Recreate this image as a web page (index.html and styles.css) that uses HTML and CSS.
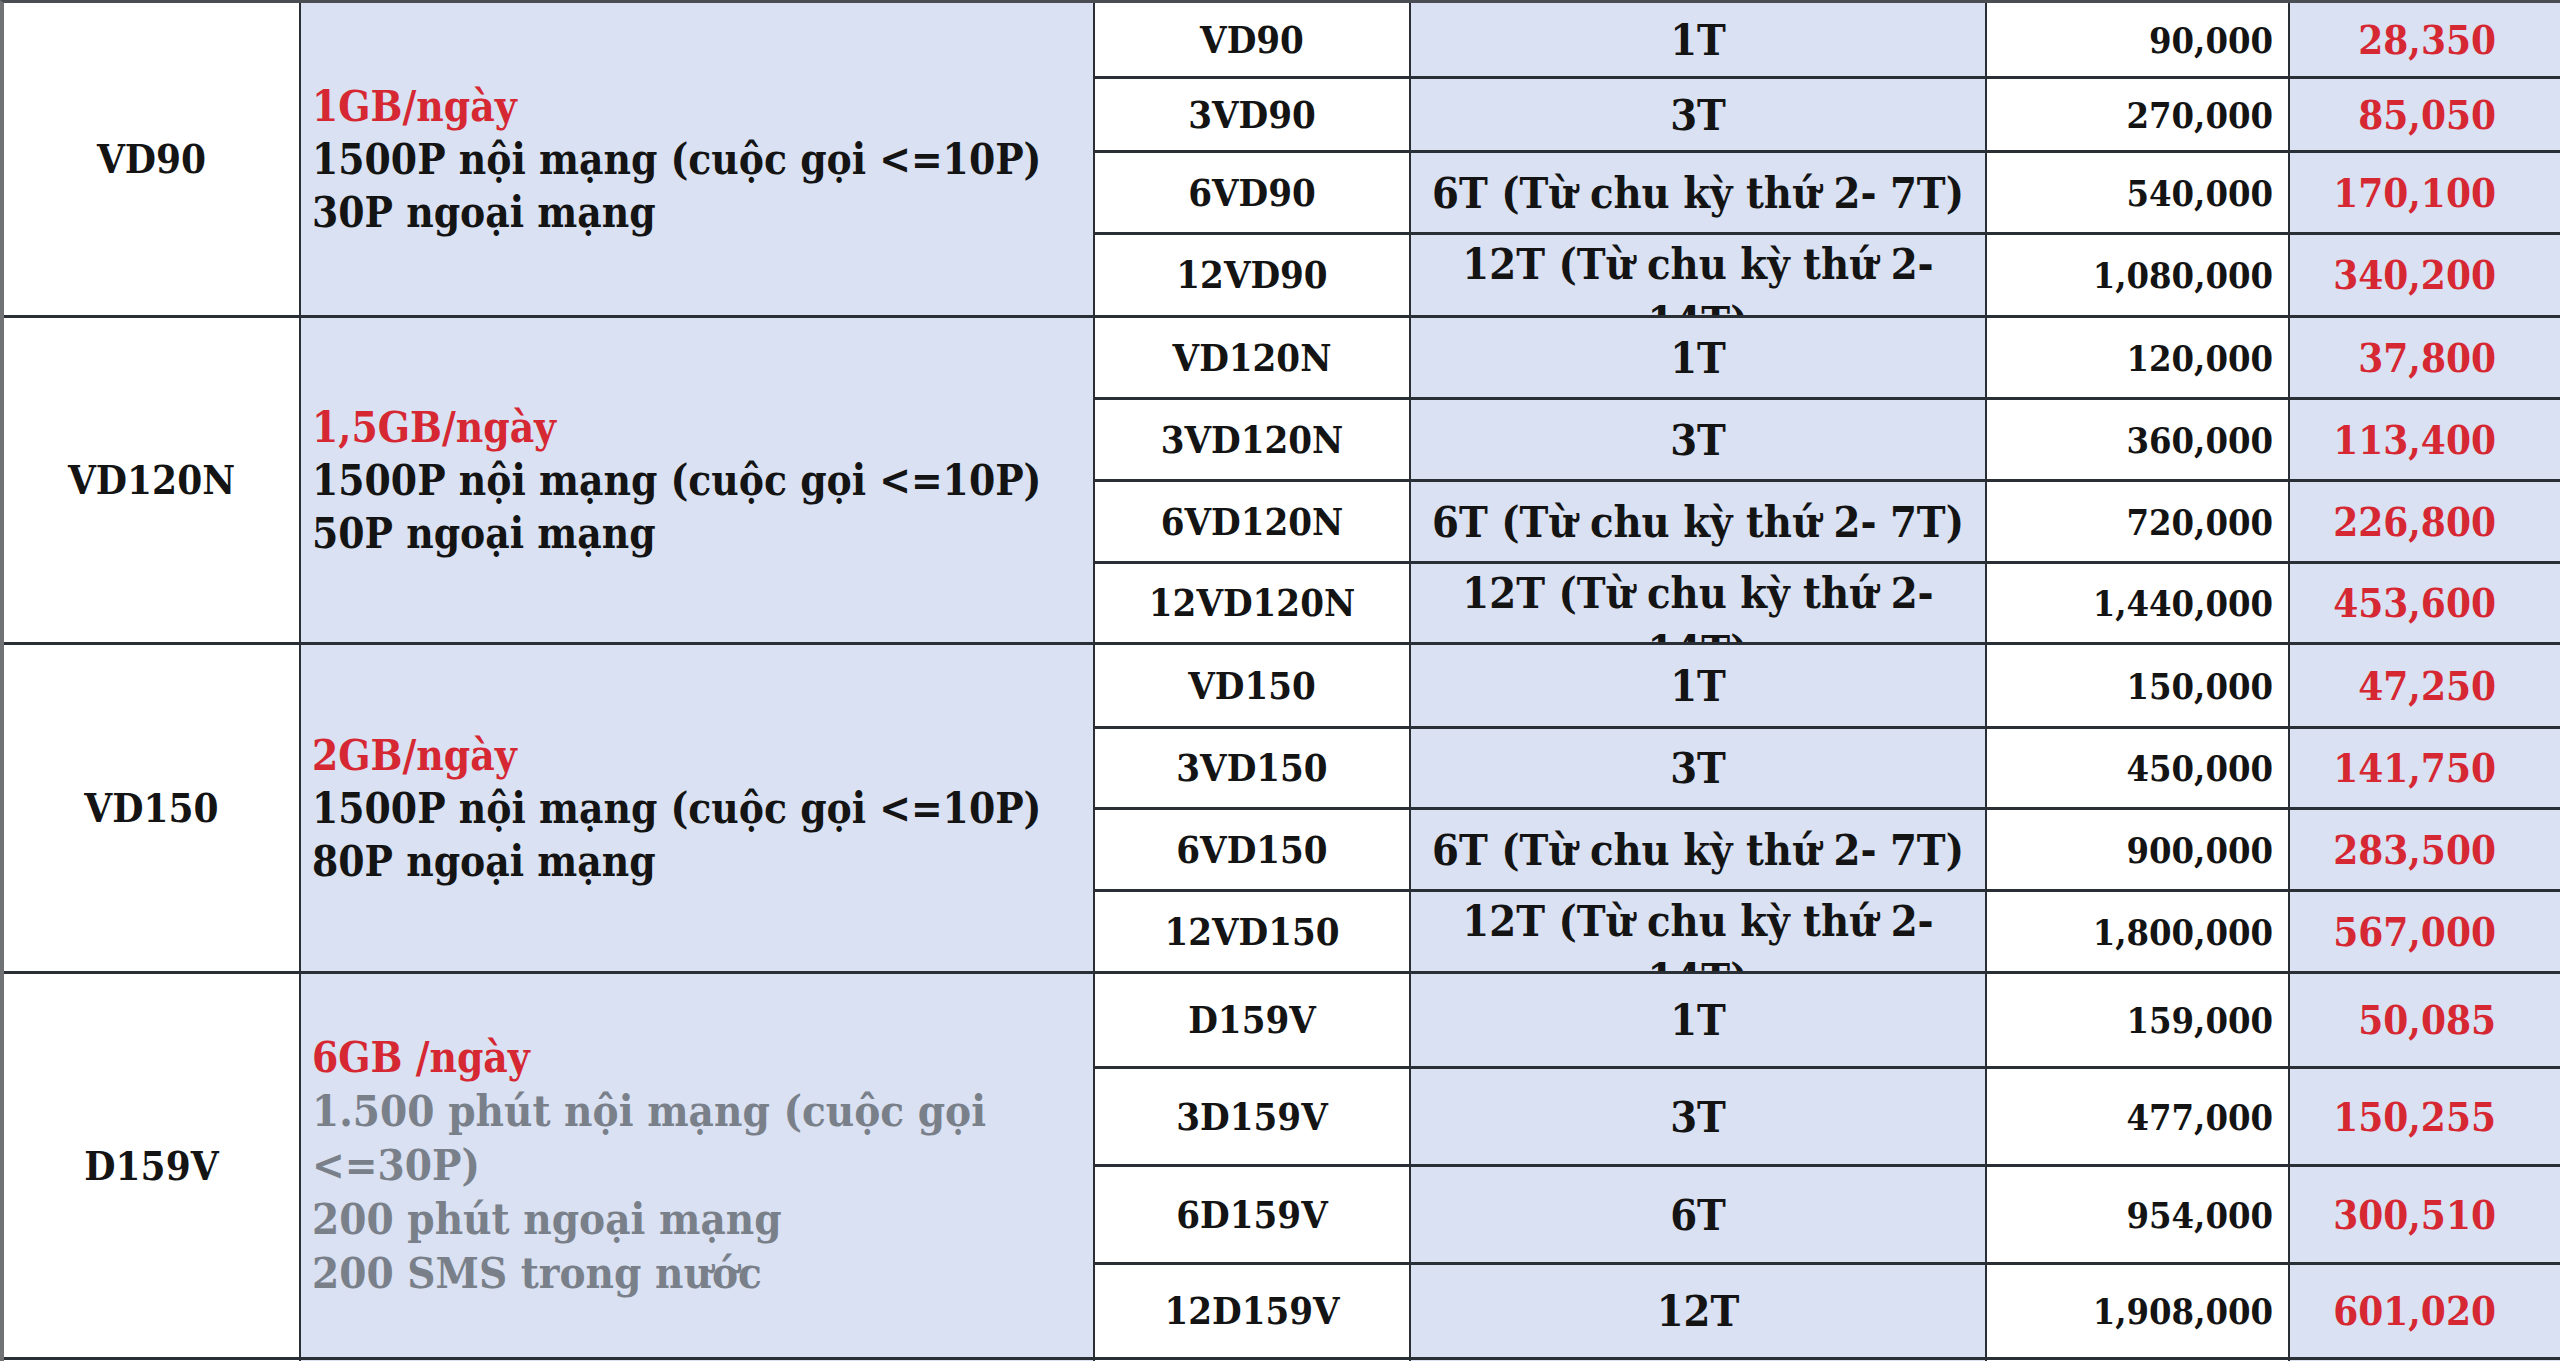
FILE: index.html
```html
<!DOCTYPE html>
<html lang="vi">
<head>
<meta charset="utf-8">
<title>Bảng giá gói cước</title>
<link rel="stylesheet" href="styles.css">
</head>
<body>
<div class="sheet">
  <div class="cell plan">VD90</div>
  <div class="cell desc blue"><div class="lines"><span class="red">1GB/ngày</span><br>1500P nội mạng (cuộc gọi &lt;=10P)<br>30P ngoại mạng</div></div>
  <div class="cell code">VD90</div><div class="cell cycle blue">1T</div><div class="cell price">90,000</div><div class="cell promo blue">28,350</div>
  <div class="cell code">3VD90</div><div class="cell cycle blue">3T</div><div class="cell price">270,000</div><div class="cell promo blue">85,050</div>
  <div class="cell code">6VD90</div><div class="cell cycle blue">6T (Từ chu kỳ thứ 2- 7T)</div><div class="cell price">540,000</div><div class="cell promo blue">170,100</div>
  <div class="cell code">12VD90</div><div class="cell cycle blue wrap">12T (Từ chu kỳ thứ 2- 14T)</div><div class="cell price">1,080,000</div><div class="cell promo blue">340,200</div>

  <div class="cell plan">VD120N</div>
  <div class="cell desc blue"><div class="lines"><span class="red">1,5GB/ngày</span><br>1500P nội mạng (cuộc gọi &lt;=10P)<br>50P ngoại mạng</div></div>
  <div class="cell code">VD120N</div><div class="cell cycle blue">1T</div><div class="cell price">120,000</div><div class="cell promo blue">37,800</div>
  <div class="cell code">3VD120N</div><div class="cell cycle blue">3T</div><div class="cell price">360,000</div><div class="cell promo blue">113,400</div>
  <div class="cell code">6VD120N</div><div class="cell cycle blue">6T (Từ chu kỳ thứ 2- 7T)</div><div class="cell price">720,000</div><div class="cell promo blue">226,800</div>
  <div class="cell code">12VD120N</div><div class="cell cycle blue wrap">12T (Từ chu kỳ thứ 2- 14T)</div><div class="cell price">1,440,000</div><div class="cell promo blue">453,600</div>

  <div class="cell plan">VD150</div>
  <div class="cell desc blue"><div class="lines"><span class="red">2GB/ngày</span><br>1500P nội mạng (cuộc gọi &lt;=10P)<br>80P ngoại mạng</div></div>
  <div class="cell code">VD150</div><div class="cell cycle blue">1T</div><div class="cell price">150,000</div><div class="cell promo blue">47,250</div>
  <div class="cell code">3VD150</div><div class="cell cycle blue">3T</div><div class="cell price">450,000</div><div class="cell promo blue">141,750</div>
  <div class="cell code">6VD150</div><div class="cell cycle blue">6T (Từ chu kỳ thứ 2- 7T)</div><div class="cell price">900,000</div><div class="cell promo blue">283,500</div>
  <div class="cell code">12VD150</div><div class="cell cycle blue wrap">12T (Từ chu kỳ thứ 2- 14T)</div><div class="cell price">1,800,000</div><div class="cell promo blue">567,000</div>

  <div class="cell plan">D159V</div>
  <div class="cell desc blue"><div class="lines"><span class="red">6GB /ngày</span><br><span class="gray">1.500 phút nội mạng (cuộc gọi<br>&lt;=30P)<br>200 phút ngoại mạng<br>200 SMS trong nước</span></div></div>
  <div class="cell code">D159V</div><div class="cell cycle blue">1T</div><div class="cell price">159,000</div><div class="cell promo blue">50,085</div>
  <div class="cell code">3D159V</div><div class="cell cycle blue">3T</div><div class="cell price">477,000</div><div class="cell promo blue">150,255</div>
  <div class="cell code">6D159V</div><div class="cell cycle blue">6T</div><div class="cell price">954,000</div><div class="cell promo blue">300,510</div>
  <div class="cell code">12D159V</div><div class="cell cycle blue">12T</div><div class="cell price">1,908,000</div><div class="cell promo blue">601,020</div>

  <div class="cell plan"></div><div class="cell desc blue"></div><div class="cell code"></div><div class="cell cycle blue"></div><div class="cell price"></div><div class="cell promo blue"></div>
</div>
</body>
</html>
```

FILE: styles.css
```css
html, body {
  margin: 0;
  padding: 0;
  width: 2560px;
  height: 1361px;
  overflow: hidden;
  background: #ffffff;
}

.sheet {
  display: grid;
  grid-template-columns: 295px 792px 314px 574px 301px 1fr;
  grid-template-rows: 73px 71px 79px 80px 79px 79px 79px 78px 81px 78px 79px 79px 92px 95px 95px 92px 40px;
  column-gap: 2px;
  row-gap: 3px;
  background: #2a2e35;
  border-left: 4px solid #707274;
  border-top: 3px solid #4a4d52;
  font-family: "DejaVu Serif Condensed", "DejaVu Serif", "Liberation Serif", serif;
  font-stretch: condensed;
  font-weight: bold;
  color: #141414;
}

.cell {
  background: #ffffff;
  display: flex;
  align-items: center;
  overflow: hidden;
  font-size: 38px;
  line-height: 52px;
  white-space: nowrap;
}

.blue {
  background: #d9e1f2;
}

.plan {
  grid-row: span 4;
  justify-content: center;
  font-size: 40px;
}

.desc {
  grid-row: span 4;
  padding-left: 11px;
  font-size: 42px;
  line-height: 53px;
}

.code {
  justify-content: center;
}

.cycle {
  justify-content: center;
  text-align: center;
  font-size: 43px;
}

.cycle.wrap {
  align-items: flex-start;
  white-space: normal;
  padding: 0 30px;
  line-height: 58px;
}

.price {
  justify-content: flex-end;
  padding-right: 15px;
  font-size: 36px;
}

.promo {
  justify-content: flex-end;
  padding-right: 64px;
  font-size: 40px;
  color: #d62832;
}

.red {
  color: #d62832;
}

.gray {
  color: #7a8089;
  font-size: 43.5px;
}
```
